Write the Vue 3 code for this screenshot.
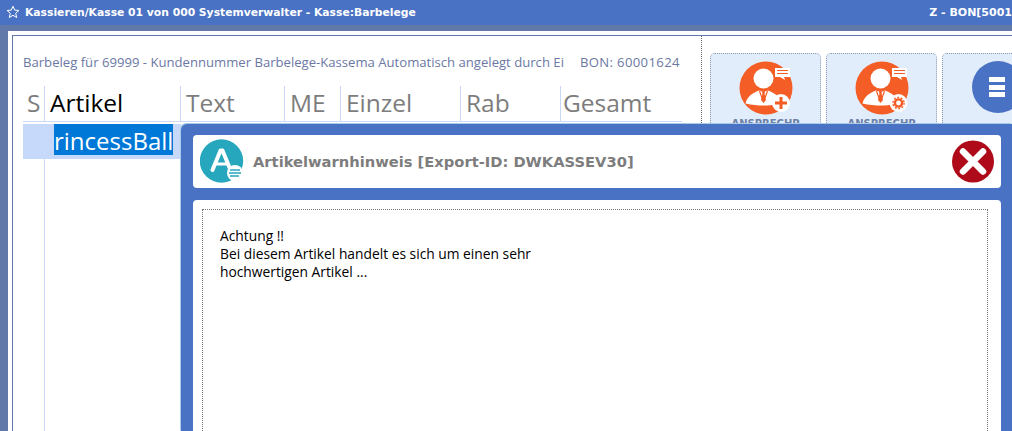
<script setup>
const columns = [
  { label: 'S', width: 22 },
  { label: 'Artikel', width: 136, active: true },
  { label: 'Text', width: 104 },
  { label: 'ME', width: 56 },
  { label: 'Einzel', width: 120 },
  { label: 'Rab', width: 100 },
  { label: 'Gesamt', width: 121 }
]
</script>

<template>
  <div class="page">
    <header class="titlebar">
      <div class="title-left">
        <svg class="star" width="14" height="14" viewBox="0 0 14 14" aria-hidden="true">
          <path d="M7 1.200 8.700 5.100 12.900 5.500 9.700 8.300 10.700 12.500 7 10.300 3.300 12.500 4.300 8.300 1.100 5.500 5.300 5.100Z" fill="none" stroke="#fff" stroke-width="1" />
        </svg>
        <span>Kassieren/Kasse 01 von 000 Systemverwalter - Kasse:Barbelege</span>
      </div>
      <span class="title-right">Z - BON[5001</span>
    </header>

    <main class="workspace">
      <div class="frame">
        <section class="receipt">
          <p class="info">
            <span>Barbeleg für 69999 - Kundennummer Barbelege-Kassema Automatisch angelegt durch Ei</span>
            <span class="bon">BON: 60001624</span>
          </p>
          <div class="grid-head">
            <div
              v-for="col in columns"
              :key="col.label"
              class="col-head"
              :class="{ active: col.active }"
              :style="{ width: col.width + 'px' }"
            >{{ col.label }}</div>
          </div>
          <div class="grid-row">
            <div class="cell-s"></div>
            <div class="cell-article"><span class="selected">rincessBall</span></div>
          </div>
        </section>

        <aside class="actions">
          <div class="action">
            <svg width="54" height="54" viewBox="0 0 54 54" aria-hidden="true">
              <circle cx="27" cy="27" r="26.500" fill="#f45d25" />
              <circle cx="24.500" cy="17.500" r="10" fill="#fff" />
              <path d="M6.500 42.500C8 36 13 32 20 29.500L24.500 31 29 29.500C36 32 41 36 43 42.500 36 44 30 44.500 24.500 44.500S13 44 6.500 42.500Z" fill="#fff" />
              <path d="M20.500 30 23 37M28.500 30 26 37" stroke="#f45d25" stroke-width="1.200" />
              <path d="M23 30.500h3l-.4 2.500 1.400 6-2.500 3-2.500-3 1.400-6Z" fill="#f45d25" />
              <path d="M36 7h15v9h-6l1 3-5-3h-5Z" fill="#fff" />
              <path d="M38 9.500h11M38 12.500h11" stroke="#f45d25" stroke-width="1.200" />
              <circle cx="42" cy="42" r="9" fill="#fff" />
              <path d="M42 36v12M36 42h12" stroke="#f45d25" stroke-width="3" />
            </svg>
            <span class="action-label">ANSPRECHP</span>
          </div>
          <div class="action">
            <svg width="54" height="54" viewBox="0 0 54 54" aria-hidden="true">
              <circle cx="27" cy="27" r="26.500" fill="#f45d25" />
              <circle cx="25.500" cy="17.500" r="10" fill="#fff" />
              <path d="M7.500 42.500C9 36 14 32 21 29.500L25.500 31 30 29.500C37 32 42 36 44 42.500 37 44 31 44.500 25.500 44.500S14 44 7.500 42.500Z" fill="#fff" />
              <path d="M21.500 30 24 37M29.500 30 27 37" stroke="#f45d25" stroke-width="1.200" />
              <path d="M24 30.500h3l-.4 2.500 1.400 6-2.500 3-2.500-3 1.400-6Z" fill="#f45d25" />
              <path d="M37 7h15v9h-6l1 3-5-3h-5Z" fill="#fff" />
              <path d="M39 9.500h11M39 12.500h11" stroke="#f45d25" stroke-width="1.200" />
              <circle cx="43.500" cy="42" r="9" fill="#fff" />
              <circle cx="43.500" cy="42" r="3.600" fill="none" stroke="#f45d25" stroke-width="2.400" />
              <circle cx="43.500" cy="42" r="5.600" fill="none" stroke="#f45d25" stroke-width="1.400" stroke-dasharray="1.800 1.700" />
            </svg>
            <span class="action-label">ANSPRECHP</span>
          </div>
          <div class="action">
            <svg width="54" height="54" viewBox="0 0 54 54" aria-hidden="true">
              <circle cx="27" cy="26" r="26" fill="#4a72c4" />
              <path d="M18 16h16v5H18ZM18 24h16v5H18ZM18 31h16v5H18Z" fill="#fff" />
            </svg>
          </div>
        </aside>
      </div>
    </main>

    <div class="modal">
      <div class="modal-head">
        <svg width="46" height="46" viewBox="0 0 46 46" aria-hidden="true">
          <circle cx="21.500" cy="22" r="21.700" fill="#27a7bd" />
          <path d="M12.500 31 20.500 11.500h2L30.500 31" fill="none" stroke="#fff" stroke-width="4" stroke-linecap="round" stroke-linejoin="round" />
          <path d="M15.500 25h12" stroke="#fff" stroke-width="3" />
          <circle cx="35" cy="34" r="8" fill="#fff" />
          <path d="M30 31h10M29 34h12M30 37h9" stroke="#27a7bd" stroke-width="1.500" />
        </svg>
        <h1 class="modal-title">Artikelwarnhinweis [Export-ID: DWKASSEV30]</h1>
        <svg class="close" width="42" height="43" viewBox="0 0 42 43" aria-hidden="true">
          <circle cx="21" cy="21.500" r="21" fill="#ae0a19" />
          <path d="M11 11.500 31 31.500M31 11.500 11 31.500" stroke="#fff" stroke-width="6.500" stroke-linecap="round" />
        </svg>
      </div>
      <div class="modal-body">
        <div class="message">
          <p>Achtung !!</p>
          <p>Bei diesem Artikel handelt es sich um einen sehr</p>
          <p>hochwertigen Artikel ...</p>
        </div>
      </div>
    </div>
  </div>
</template>

<style>
html, body { margin: 0; overflow: hidden; }
</style>

<style scoped>
.page {
  position: relative;
  width: 1012px;
  height: 431px;
  overflow: hidden;
  background: #6079a8;
  font-family: "DejaVu Sans", sans-serif;
}
.titlebar {
  height: 25px;
  background: #4a72c4;
  color: #fff;
  display: flex;
  align-items: center;
  justify-content: space-between;
  padding: 0 0 1px 6px;
  box-sizing: border-box;
  font-size: 10.780px;
  font-weight: 700;
  white-space: nowrap;
}
.title-left { display: flex; align-items: center; gap: 5px; }
.title-right { font-size: 11px; }
.workspace {
  height: 406px;
  padding: 6px 0 0 8px;
  box-sizing: border-box;
}
.frame {
  height: 400px;
  background: #fff;
  padding: 4px 0 0 4px;
  box-sizing: border-box;
  display: flex;
  position: relative;
}
.frame::before {
  content: "";
  position: absolute;
  left: 4px;
  top: 4px;
  right: 0;
  bottom: 0;
  border-top: 1px solid #6079a8;
  border-left: 1px solid #6079a8;
  pointer-events: none;
}
.receipt {
  width: 689px;
  flex: none;
  padding: 10px 0 0 11px;
  box-sizing: border-box;
}
.info {
  margin: 0 0 8px;
  height: 33px;
  display: flex;
  gap: 16px;
  align-items: center;
  font-family: "Open Sans", sans-serif;
  font-size: 13.120px;
  color: #6b78a4;
  white-space: nowrap;
}
.bon { letter-spacing: 0.35px; }
.grid-head {
  display: flex;
  height: 35px;
  border-bottom: 1px solid #c9daf8;
  width: 659px;
}
.col-head {
  flex: none;
  box-sizing: border-box;
  padding: 0 0 0 5px;
  border-right: 1px solid #c9daf8;
  font-family: "Open Sans", sans-serif;
  font-size: 24.500px;
  line-height: 34px;
  color: #7d7d7d;
  white-space: nowrap;
}
.col-head:first-child { padding-left: 4px; }
.col-head:last-child { border-right: 0; padding-left: 2px; }
.col-head.active { color: #000; }
.grid-row {
  display: flex;
  height: 340px;
  margin-top: 2px;
}
.cell-s {
  width: 22px;
  height: 100%;
  background: linear-gradient(#c6d9fb 35px, transparent 35px);
  box-sizing: border-box;
  border-right: 1px solid #c9daf8;
}
.cell-article {
  width: 136px;
  height: 100%;
  background: linear-gradient(#c6d9fb 35px, transparent 35px);
  padding-left: 9px;
  box-sizing: border-box;
  border-right: 1px solid #c9daf8;
}
.selected {
  display: inline-block;
  height: 31px;
  background: #0078d7;
  color: #fff;
  font-family: "Open Sans", sans-serif;
  font-size: 24px;
  line-height: 33px;
  white-space: nowrap;
}
.actions {
  flex: 1;
  border-left: 1px dotted #666;
  margin-top: 1px;
  padding: 17px 0 0 8px;
  display: flex;
  gap: 5px;
  align-items: flex-start;
}
.action {
  width: 111px;
  height: 100px;
  flex: none;
  box-sizing: border-box;
  background: #e2edfb;
  border: 1px dotted #8a9ab5;
  border-radius: 5px;
  display: flex;
  flex-direction: column;
  align-items: center;
  padding-top: 7px;
  color: #6c80a8;
}
.action-label {
  font-size: 10px;
  font-weight: 700;
  margin-top: 3px;
}
.modal {
  position: absolute;
  left: 181px;
  top: 124px;
  width: 831px;
  height: 307px;
  background: #4a72c4;
  border-radius: 6px 0 0 0;
  padding: 11px 11px 0 12px;
  box-sizing: border-box;
  box-shadow: -1px -1px 0 #a8cbe6;
}
.modal-head {
  height: 53px;
  background: #fff;
  border-radius: 4px;
  display: flex;
  align-items: center;
  padding: 0 7px 0 7px;
}
.modal-title {
  flex: 1;
  margin: 0 0 0 7px;
  font-size: 14.700px;
  font-weight: 700;
  color: #7d7d7d;
  white-space: nowrap;
}
.modal-body {
  margin-top: 12px;
  height: 240px;
  background: #fff;
  border-radius: 4px 4px 0 0;
  padding: 9px 13px 0 9px;
}
.message {
  height: 100%;
  border: 1px dotted #777;
  border-bottom: 0;
  padding: 17px 17px 0;
  box-sizing: border-box;
  font-family: "Open Sans", sans-serif;
  font-size: 13.800px;
  line-height: 18px;
  color: #000;
}
.message p { margin: 0; }
</style>
